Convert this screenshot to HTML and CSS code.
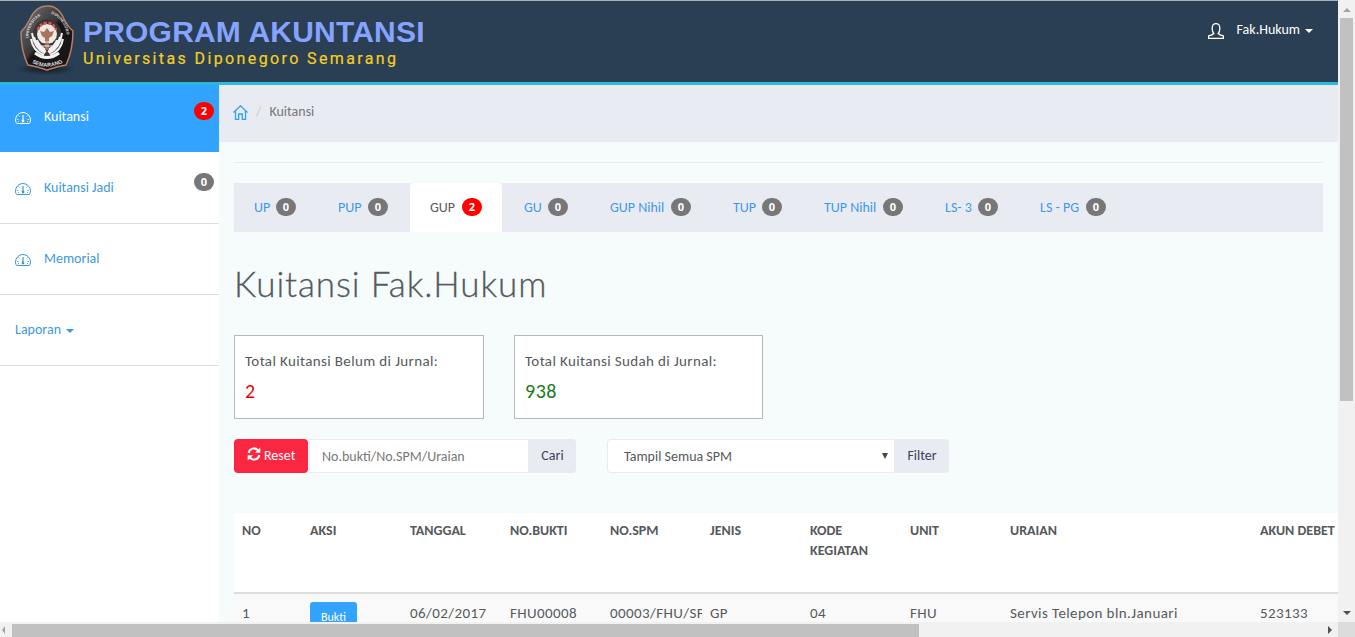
FILE: index.html
```html
<!DOCTYPE html>
<html lang="id">
<head>
<meta charset="utf-8">
<title>Program Akuntansi</title>
<link rel="stylesheet" href="styles.css">
</head>
<body>
<svg class="symbols" aria-hidden="true">
  <symbol id="gauge" viewBox="0 0 16 12">
    <path d="M1.700 11.500h12.600q1.200-1.200 1.200-3.500A7.500 7.500 0 0 0 .5 8q0 2.300 1.200 3.500Z" fill="none" stroke="currentColor"/>
    <path d="M8 3v5" stroke="currentColor" stroke-width="1.200"/>
    <path d="M2 7.500h1.500M12.500 7.500H14M3.500 3.500l1 1M12.500 3.500l-1 1M3 9.500h1M12 9.500h1" stroke="currentColor" stroke-width=".8" fill="none"/>
    <circle cx="8" cy="9" r="1.400" fill="currentColor"/>
  </symbol>
</svg>
<div class="window">
  <header class="header">
    <div class="brand">
      <svg class="logo" viewBox="0 0 66 72">
        <defs>
          <radialGradient id="shadow"><stop offset="0" stop-color="#111820"/><stop offset="1" stop-color="#111820" stop-opacity="0"/></radialGradient>
          <linearGradient id="shine" x2="1" y2="1"><stop offset="0" stop-color="#777"/><stop offset=".45" stop-color="#393737"/><stop offset=".5" stop-color="#171515"/></linearGradient>
          <path id="arcL" d="M14.500 34Q14 18 31 9"/>
          <path id="arcR" d="M37 9.500Q53 17 53 36"/>
          <path id="arcB" d="M18 59Q33 67 50 58"/>
        </defs>
        <ellipse cx="32" cy="65" rx="30" ry="6" fill="url(#shadow)"/>
        <path d="M33 2Q44 1 50 15Q54 23 59 27Q59 46 52 61Q45 62 33 66Q21 62 14 61Q7 47 7 28Q12 23 16 15Q22 2 33 2Z" fill="url(#shine)" stroke="#b37f68" stroke-width="1.500"/>
        <ellipse cx="33" cy="34" rx="15" ry="19" fill="#3c3737"/>
        <g fill="none" stroke="#f2f2f2" stroke-width="2">
          <path d="M31 49Q20 44 18 29M32 48Q22 42 20 33M32 46Q25 42 23 36M30 51Q19 47 17 35M35 49Q46 44 48 29M34 48Q44 42 46 33M34 46Q41 42 43 36M36 51Q47 47 49 35"/>
          <path d="M21 49Q33 58 45 49" stroke-width="3"/>
        </g>
        <circle cx="33" cy="30" r="10" fill="#eee8e5"/>
        <path d="M24 26q2-7 9-7t9 7" fill="none" stroke="#e65750" stroke-width="2.500" stroke-dasharray="3 1.500"/>
        <path d="M33 24l3 4 4-1-2 5-3 2v12h-4V34l-3-2-2-5 4 1Z" fill="#a6745d"/>
        <path d="M27 38h12M28 42h10" stroke="#f5f0ed" stroke-width="1.200"/>
        <g class="logo-text"><text><textPath href="#arcL">UNIVERSITAS</textPath></text><text><textPath href="#arcR">DIPONEGORO</textPath></text><text class="logo-city"><textPath href="#arcB">SEMARANG</textPath></text></g>
      </svg>
      <div class="brand-name"><div class="title">PROGRAM AKUNTANSI</div><div class="subtitle">Universitas Diponegoro Semarang</div></div>
    </div>
    <div class="user">
      <svg class="user-icon" viewBox="0 0 16 16"><path d="M.6 15.400v-2.600q4-.7 5.200-2.300-2-1.800-1.500-6Q4.300.6 8 .6t3.700 3.900q.5 4.200-1.500 6 1.200 1.600 5.200 2.300v2.600Z" fill="none" stroke="currentColor" stroke-width="1.300"/></svg>
      <span>Fak.Hukum</span><i class="caret"></i>
    </div>
  </header>
  <div class="body">
    <nav class="sidebar">
      <a class="side-item active"><svg class="gauge"><use href="#gauge"/></svg><span>Kuitansi</span><b class="badge red">2</b></a>
      <a class="side-item"><svg class="gauge"><use href="#gauge"/></svg><span>Kuitansi Jadi</span><b class="badge">0</b></a>
      <a class="side-item"><svg class="gauge"><use href="#gauge"/></svg><span>Memorial</span></a>
      <a class="side-item"><span>Laporan</span><i class="caret"></i></a>
    </nav>
    <main class="main">
      <div class="breadcrumb">
        <svg class="home" viewBox="0 0 15 15"><path d="M.5 7.500L7.500.8l7 6.700M2.500 6v8.500h3.200V9h3.600v5.500h3.200V6" fill="none" stroke="currentColor" stroke-width="1.300"/></svg>
        <span class="slash">/</span><span>Kuitansi</span>
      </div>
      <div class="content">
        <hr class="rule">
        <div class="tabs">
          <a class="tab"><span>UP</span><b class="badge">0</b></a>
          <a class="tab"><span>PUP</span><b class="badge">0</b></a>
          <a class="tab current"><span>GUP</span><b class="badge red">2</b></a>
          <a class="tab"><span>GU</span><b class="badge">0</b></a>
          <a class="tab"><span>GUP Nihil</span><b class="badge">0</b></a>
          <a class="tab"><span>TUP</span><b class="badge">0</b></a>
          <a class="tab"><span>TUP Nihil</span><b class="badge">0</b></a>
          <a class="tab"><span>LS- 3</span><b class="badge">0</b></a>
          <a class="tab"><span>LS - PG</span><b class="badge">0</b></a>
        </div>
        <h1>Kuitansi Fak.Hukum</h1>
        <div class="cards">
          <div class="card"><div>Total Kuitansi Belum di Jurnal:</div><div class="count pending">2</div></div>
          <div class="card"><div>Total Kuitansi Sudah di Jurnal:</div><div class="count done">938</div></div>
        </div>
        <div class="filters">
          <button class="reset"><svg class="refresh" viewBox="0 0 14 14"><path d="M1.700 6A5.300 5.300 0 0 1 11 3.300M12.300 8A5.300 5.300 0 0 1 3 10.700" fill="none" stroke="currentColor" stroke-width="2"/><path d="M13.300.5v5.300H8ZM.7 13.500V8.200H6Z" fill="currentColor"/></svg><span>Reset</span></button>
          <div class="search">No.bukti/No.SPM/Uraian</div><button class="addon cari">Cari</button>
          <div class="select"><span>Tampil Semua SPM</span><i class="arrow"></i></div><button class="addon filter">Filter</button>
        </div>
        <div class="table">
          <div class="row head"><div>NO</div><div>AKSI</div><div>TANGGAL</div><div>NO.BUKTI</div><div>NO.SPM</div><div>JENIS</div><div>KODE<br>KEGIATAN</div><div>UNIT</div><div>URAIAN</div><div>AKUN DEBET</div></div>
          <div class="row data"><div>1</div><div class="action"><button class="bukti">Bukti</button></div><div>06/02/2017</div><div>FHU00008</div><div class="clip">00003/FHU/SP</div><div>GP</div><div>04</div><div>FHU</div><div>Servis Telepon bln.Januari</div><div>523133</div></div>
        </div>
      </div>
    </main>
  </div>
</div>
<div class="vbar"><i class="up"></i><div class="vthumb"></div><i class="down"></i></div>
<div class="hbar"><i class="left"></i><div class="hthumb"></div><i class="right"></i></div>
<div class="corner"></div>
</body>
</html>
```

FILE: styles.css
```css
* { box-sizing: border-box; }
body {
  margin: 0; width: 1355px; height: 637px; overflow: hidden;
  display: grid; grid-template: 622px 15px / 1338px 17px;
  font: 14px/20px Calibri, Carlito, Lato, sans-serif; color: #55595c;
}
.symbols { position: absolute; width: 0; height: 0; }
.window { overflow: hidden; display: flex; flex-direction: column; background: #f6fcfc; }

.header { height: 85px; flex: none; display: flex; justify-content: space-between; background: #2a3f54; border-top: 1px solid #a9b0b7; border-bottom: 3px solid #2cb9df; }
.brand { display: flex; }
.logo { width: 66px; height: 72px; margin: 3px 4px 0 14px; }
.logo-text { font: bold 4px "Liberation Sans", sans-serif; fill: #ddd; }
.logo-city { font-size: 5.5px; }
.title { margin: 14px 0 0 -1px; font: bold 30px/34px "Liberation Sans", Arial, sans-serif; color: #85a3ff; letter-spacing: .2px; white-space: nowrap; }
.subtitle { font: 400 16px/20px Roboto, sans-serif; letter-spacing: 2.38px; color: #f4ce22; -webkit-text-stroke: .2px #f4ce22; margin: 0 0 0 -1px; white-space: nowrap; }
.user { display: flex; align-items: center; height: 20px; margin: 19px 25px 0 0; color: #fff; }
.user-icon { width: 16px; height: 16px; margin: 1px 13px 0 0; }
.caret { width: 0; height: 0; border: 4px solid transparent; border-top-color: currentColor; border-bottom: 0; margin: 2px 0 0 5px; }

.body { display: flex; flex: 1; min-height: 0; }
.sidebar { width: 219px; flex: none; background: #fff; }
.side-item { display: flex; height: 71px; padding: 25px 5px 0 15px; border-bottom: 1px solid #ddd; color: #3e98e0; }
.side-item.active { height: 68px; padding-top: 22px; background: #32a3ff; color: #fff; border-color: #fff; }
.gauge { width: 16px; height: 12px; margin: 5px 13px 0 0; }
.badge { width: 20px; height: 18px; border-radius: 10px; background: #777; color: #fff; font: bold 11px/18px "Open Sans", sans-serif; text-align: center; }
.side-item .badge { margin: -5px 0 0 auto; }
.badge.red { background: #f00; }
.side-item .caret { margin-top: 9px; }

.main { flex: 1; min-width: 0; }
.breadcrumb { height: 57px; background: #e9ebf3; padding: 17px 15px; display: flex; color: #777; }
.home { width: 15px; height: 15px; color: #32a3e8; margin: 3px 8px 0 -1px; }
.slash { color: #ccc; margin-right: 8px; }
.content { padding: 20px 15px 0; }
.rule { border: 0; border-top: 1px solid #e7ecee; margin: 0 0 20px; }
.tabs { height: 49px; background: #e9ebf3; display: grid; gap: 2px; grid-template-columns: 82px 90px 92px 84px 121px 89px 119px 93px 106px; }
.tab { display: flex; justify-content: space-between; align-items: center; padding: 0 20px 1px; color: #3e98ed; white-space: nowrap; }
.tab span { padding-top: 2px; }
.tab.current { background: #fff; color: #55595c; border-radius: 4px 4px 0 0; }
h1 { margin: 31px 0 31px; font-family: Lato, sans-serif; font-size: 35px; font-weight: 300; line-height: 41px; letter-spacing: .9px; -webkit-text-stroke: .3px #55595c; }
.cards { display: grid; grid-template-columns: 250px 249px; gap: 30px; }
.card { height: 84px; border: 1px solid #b5b8bc; background: #fff; padding: 15px 10px; font-size: 15px; letter-spacing: .37px; white-space: nowrap; }
.count { font-size: 20px; line-height: 24px; margin-top: 8px; letter-spacing: .5px; }
.pending { color: #e00; }
.done { color: #1c7a1c; }
.filters { display: flex; height: 34px; margin-top: 20px; }
button { border: 0; font: inherit; color: inherit; }
.reset { width: 74px; background: #fb263f; color: #fff; border-radius: 4px; display: flex; padding: 7px 12px 0 13px; gap: 3px; }
.refresh { width: 14px; height: 14px; margin-top: 1px; flex: none; }
.search { width: 220px; margin-left: 1px; background: #fff; border: 1px solid #e9ebf3; padding: 7px 12px 0; color: #777; white-space: nowrap; }
.addon { background: #e9ebf3; color: #3b4258; border-radius: 0 4px 4px 0; padding: 0; }
.cari { width: 47px; }
.select { width: 288px; margin-left: 31px; background: #fff; border: 1px solid #e9ebf3; border-radius: 4px 0 0 4px; padding: 7px 6px 0 16px; display: flex; justify-content: space-between; }
.arrow { width: 0; height: 0; border: 3.5px solid transparent; border-top: 6px solid #444; border-bottom: 0; margin-top: 6px; }
.filter { width: 54px; }
.table { margin-top: 40px; width: 1118px; }
.row { display: grid; grid-template-columns: 68px repeat(7, 100px) 250px 100px; }
.row > div { padding: 8px 0 0 8px; white-space: nowrap; }
.head { height: 81px; background: #fff; border-bottom: 2px solid #ddd; font-weight: 700; }
.data { height: 80px; background: #f9f9f9; font-size: 15px; letter-spacing: .4px; }
.data > div { padding-top: 9px; }
.data > .action { padding-top: 8px; letter-spacing: 0; }
.row > .clip { overflow: hidden; }
.bukti { display: block; width: 47px; height: 30px; background: #32a3ff; color: #fff; font-size: 12px; border-radius: 3px; padding: 0; }

.vbar { background: #f1f1f1; display: flex; flex-direction: column; align-items: center; padding: 8px 0 7px; }
.vthumb { width: 13px; height: 383px; background: #c1c1c1; margin: 6px 0 auto; }
.hbar { background: #f1f1f1; display: flex; align-items: center; padding: 0 6px 0 2px; }
.hthumb { width: 907px; height: 13px; background: #c1c1c1; margin: 2px auto 0 7px; }
.corner { background: #dcdcdc; }
.up, .down, .left, .right { width: 0; height: 0; border: 4px solid transparent; }
.up { border-bottom-color: #a3a3a3; border-top: 0; }
.down { border-top-color: #505050; border-bottom: 0; }
.left { border-right: 3px solid #a3a3a3; border-left: 0; }
.right { border-left-color: #505050; border-right: 0; }
```
